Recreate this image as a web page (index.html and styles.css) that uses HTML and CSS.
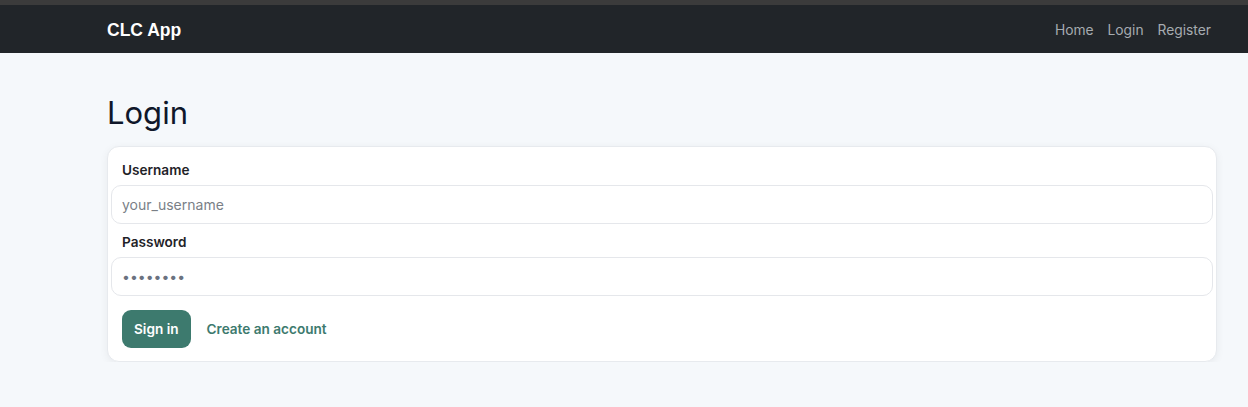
FILE: index.html
```html
<!DOCTYPE html>
<html lang="en">
<head>
<meta charset="utf-8">
<title>Login - CLC App</title>
<link rel="stylesheet" href="styles.css">
</head>
<body>
<div class="topstrip"></div>
<nav class="navbar">
  <div class="wrap nav-inner">
    <a class="brand" href="#">CLC App</a>
    <div class="nav-links">
      <a href="#">Home</a>
      <a href="#">Login</a>
      <a href="#">Register</a>
    </div>
  </div>
</nav>
<main class="wrap">
  <h1 class="title">Login</h1>
  <form class="card">
    <label class="label" for="u">Username</label>
    <input class="input" id="u" type="text" placeholder="your_username">
    <label class="label" for="p">Password</label>
    <input class="input pw" id="p" type="password" value="password">
    <div class="actions">
      <button class="btn" type="button">Sign in</button>
      <a class="link" href="#">Create an account</a>
    </div>
  </form>
</main>
</body>
</html>
```
FILE: styles.css
```css
* { box-sizing: border-box; }
html, body { margin: 0; padding: 0; }
body {
  background: #f5f8fb;
  font-family: Inter, "Noto Sans", sans-serif;
  color: #111827;
}
.topstrip { height: 5px; background: #3b3b3b; }
.navbar { background: #212529; height: 48px; }
.wrap { margin-left: 107px; width: 1110px; }
.nav-inner { display: flex; align-items: center; justify-content: space-between; height: 48px; }
.brand {
  font-family: "Liberation Sans", Arial, sans-serif;
  font-weight: 700;
  font-size: 17.5px;
  color: #ffffff;
  text-decoration: none;
  margin-top: 2px;
}
.nav-links { display: flex; gap: 14px; padding-right: 6px; margin-top: 2px; }
.nav-links a { color: #a6abb0; text-decoration: none; font-size: 13.8px; }
.title {
  margin: 41px 0 14px;
  font-size: 31px;
  line-height: 38px;
  font-weight: 400;
  color: #0f172a;
}
.card {
  display: flex;
  flex-direction: column;
  background: #ffffff;
  border: 1px solid #e7eaee;
  border-radius: 12px;
  box-shadow: 0 2px 8px rgba(15, 23, 42, 0.06);
  padding: 13px 3px 13px;
}
.label {
  font-size: 13.6px;
  font-weight: 600;
  line-height: 20px;
  color: #1f2328;
  margin-left: 11px;
  margin-bottom: 5px;
}
.input {
  height: 39px;
  border: 1px solid #e5e7eb;
  border-radius: 10px;
  padding: 0 10px;
  font-family: Inter, "Noto Sans", sans-serif;
  font-size: 14px;
  color: #6b7280;
  background: #fff;
  margin-bottom: 8px;
  outline: none;
}
.input::placeholder { color: #7a7f87; }
.pw { margin-bottom: 14px; }
.actions { display: flex; align-items: center; gap: 16px; margin-left: 11px; }
.btn {
  height: 38px;
  padding: 0 12px;
  white-space: nowrap;
  background: #3d7a6e;
  color: #ffffff;
  border: none;
  border-radius: 9px;
  font-family: Inter, "Noto Sans", sans-serif;
  font-size: 13.6px;
  font-weight: 600;
}
.link {
  color: #3d7a6e;
  font-size: 13.6px;
  font-weight: 600;
  text-decoration: none;
}
```
